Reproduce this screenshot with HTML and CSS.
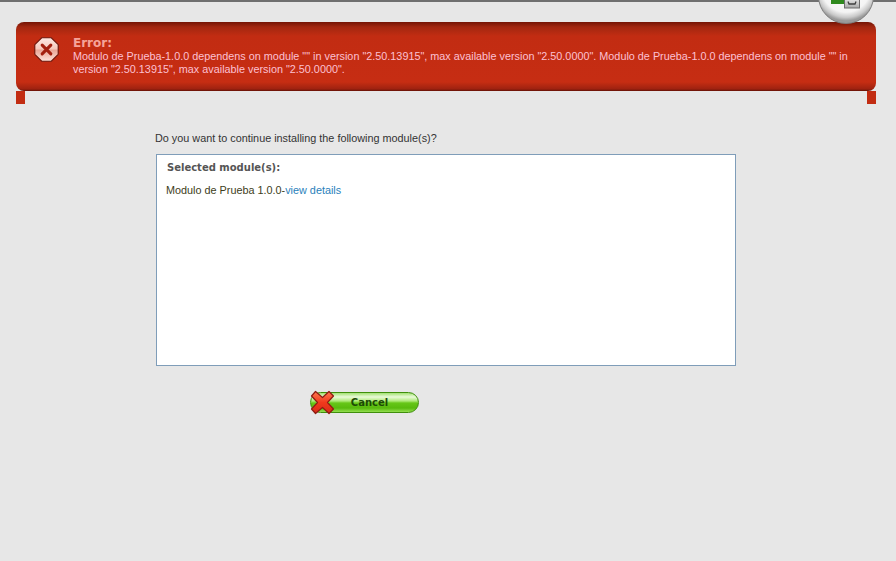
FILE: index.html
```html
<!DOCTYPE html>
<html lang="en">
<head>
<meta charset="utf-8">
<title>Install module</title>
<link rel="stylesheet" href="styles.css">
</head>
<body>
<div class="topline"></div>
<div class="badge">
  <svg width="64" height="28" viewBox="0 0 64 28">
    <defs>
      <radialGradient id="disc" cx="50%" cy="35%" r="60%">
        <stop offset="0" stop-color="#ffffff"/>
        <stop offset="0.74" stop-color="#f4f4f4"/>
        <stop offset="0.9" stop-color="#c9c9c9"/>
        <stop offset="1" stop-color="#9a9a9a"/>
      </radialGradient>
      <linearGradient id="tile" x1="0" y1="0" x2="0" y2="1">
        <stop offset="0" stop-color="#e6e6e6"/>
        <stop offset="1" stop-color="#a8a8a8"/>
      </linearGradient>
    </defs>
    <circle cx="32" cy="-4" r="27.5" fill="url(#disc)" stroke="#7d7d7d" stroke-width="1"/>
    <rect x="17" y="0" width="13" height="4" fill="#2f8a1e"/>
    <rect x="30.5" y="-1" width="15" height="9" fill="url(#tile)" stroke="#6d6d6d" stroke-width="1"/>
    <path d="M34 1.5l1 2.5h6l1-2.5" fill="none" stroke="#3f3f3f" stroke-width="1.3"/>
  </svg>
</div>
<div class="error-wrap">
  <div class="error">
    <svg class="error-icon" width="25" height="25" viewBox="0 0 26 26">
      <defs>
        <linearGradient id="oct" x1="0" y1="0" x2="0" y2="1">
          <stop offset="0" stop-color="#fdeae4"/>
          <stop offset="0.48" stop-color="#f6c8bb"/>
          <stop offset="0.52" stop-color="#e9a595"/>
          <stop offset="1" stop-color="#fde3da"/>
        </linearGradient>
      </defs>
      <path d="M8 .8h10L25.2 8v10L18 25.2H8L.8 18V8z" fill="url(#oct)" stroke="#6e150a" stroke-width="1.2"/>
      <path d="M8.5 8.5l9 9M17.5 8.5l-9 9" stroke="#a3200f" stroke-width="3.2" stroke-linecap="round"/>
    </svg>
    <div class="error-text">
      <div class="error-title">Error:</div>
      <div class="error-msg">Modulo de Prueba-1.0.0 dependens on module "" in version "2.50.13915", max available version "2.50.0000". Modulo de Prueba-1.0.0 dependens on module "" in version "2.50.13915", max available version "2.50.0000".</div>
    </div>
  </div>
  <div class="legs"><span class="leg"></span><span class="leg"></span></div>
</div>
<main class="content">
  <p class="question">Do you want to continue installing the following module(s)?</p>
  <section class="box">
    <h2 class="box-title">Selected module(s):</h2>
    <p class="box-row">Modulo de Prueba 1.0.0-<a class="link" href="#">view details</a></p>
  </section>
  <div class="actions">
    <button class="cancel" type="button">
      <svg class="cancel-x" width="25" height="25" viewBox="0 0 25 25">
        <defs>
          <linearGradient id="xg" x1="0" y1="0" x2="0" y2="1">
            <stop offset="0" stop-color="#ff7a50"/>
            <stop offset="0.5" stop-color="#f0391c"/>
            <stop offset="1" stop-color="#d92a18"/>
          </linearGradient>
        </defs>
        <path d="M5.5 1.5L12.5 7.5 19 1.5 23.5 6 17.5 12.5 23.5 19 19 23.5 12.5 17.5 5.5 23.5 1.5 19 7.5 12.5 1.5 6z" fill="url(#xg)" stroke="#8e1c14" stroke-width="1.2" stroke-linejoin="round"/>
      </svg>
      <span class="cancel-label">Cancel</span>
    </button>
  </div>
</main>
</body>
</html>
```
FILE: styles.css
```css
html, body {
  margin: 0;
  padding: 0;
}
body {
  width: 896px;
  height: 561px;
  overflow: hidden;
  position: relative;
  background: #e7e7e7;
  font-family: "Liberation Sans", Arial, sans-serif;
  font-size: 10.83px;
  color: #333;
}
.topline {
  height: 2px;
  background: #6f6f6f;
}
.badge {
  position: absolute;
  top: 0;
  left: 814px;
  width: 64px;
  height: 28px;
}
.badge svg {
  display: block;
}
.error-wrap {
  margin: 20px 20px 0 16px;
}
.error {
  box-sizing: border-box;
  height: 69px;
  display: flex;
  padding: 9px 16px 0 18px;
  border-radius: 8px;
  background: linear-gradient(#741405 0, #a22710 5px, #c22c12 14px, #c62d13 60px, #9e2210 67px, #641106 69px);
}
.error-icon {
  flex: none;
  margin: 6px 14px 0 0;
}
.error-text {
  flex: 1;
  min-width: 0;
}
.error-title {
  font-family: "DejaVu Sans", Verdana, sans-serif;
  font-weight: bold;
  font-size: 12px;
  line-height: 14px;
  color: #f5a49a;
  margin-top: 5px;
}
.error-msg {
  line-height: 13px;
  color: #fcc0d2;
}
.legs {
  display: flex;
  justify-content: space-between;
  height: 13px;
}
.leg {
  width: 9px;
  background: #c22c12;
}
.content {
  padding: 28px 0 0 155px;
}
.question {
  margin: 0 0 9px;
  line-height: 13px;
}
.box {
  box-sizing: border-box;
  width: 580px;
  height: 212px;
  margin-left: 1px;
  padding: 6px 10px;
  background: #fff;
  border: 1px solid #7f9db9;
}
.box-title {
  margin: 0 0 9px;
  font-family: "DejaVu Sans", Verdana, sans-serif;
  font-size: 10px;
  font-weight: bold;
  line-height: 14px;
  color: #555;
}
.box-row {
  margin: 0 0 0 -1px;
  line-height: 13px;
  color: #3d3d20;
}
.link {
  color: #2a7fbb;
  text-decoration: none;
}
.actions {
  padding: 26px 0 0 155px;
}
.cancel {
  display: block;
  position: relative;
  box-sizing: border-box;
  width: 109px;
  height: 21px;
  padding: 0 0 0 10px;
  border: 1px solid #3f8f0c;
  border-radius: 11px;
  background: linear-gradient(#a3e274 0, #e9fad8 4px, #aeea78 8px, #66c618 10px, #58ba0d 15px, #93de50 19px);
  font-family: "DejaVu Sans", Verdana, sans-serif;
  font-size: 10px;
  font-weight: bold;
  color: #1c4a06;
}
.cancel-x {
  position: absolute;
  left: -1px;
  top: -3px;
}
.cancel-label {
  display: block;
  text-align: center;
  line-height: 19px;
}
```
